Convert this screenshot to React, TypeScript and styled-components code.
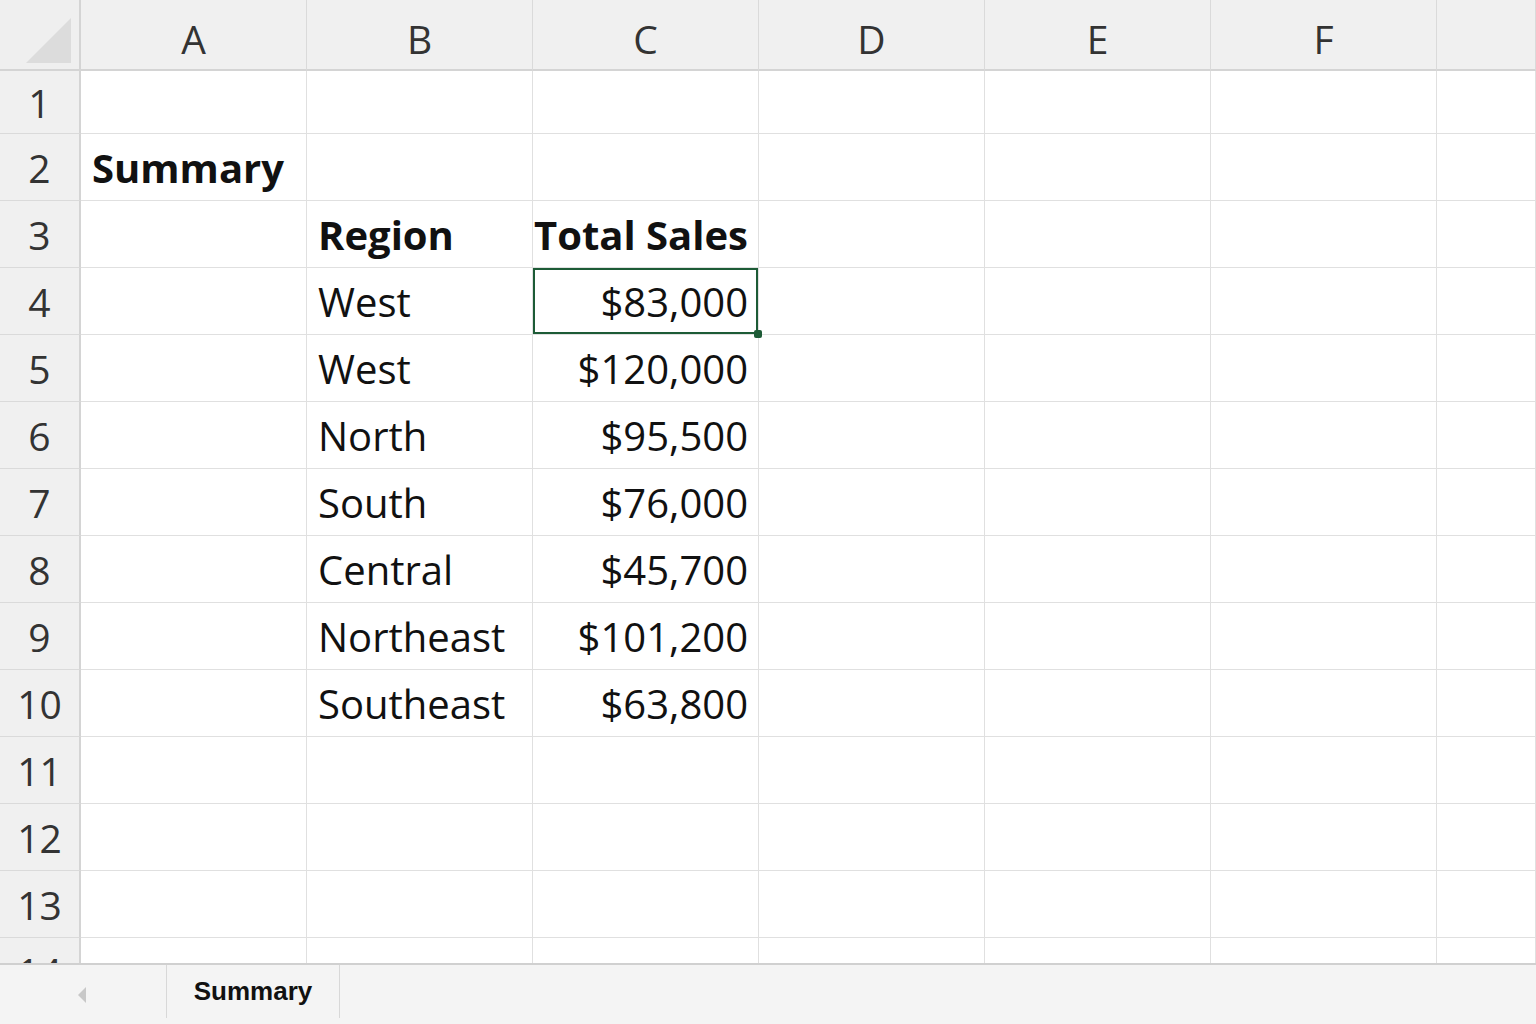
import React from "react";
import styled, { createGlobalStyle, css } from "styled-components";

const Global = createGlobalStyle`
  html, body { margin: 0; padding: 0; background: #fff; }
  body { font-family: "Open Sans", "Noto Sans", sans-serif; overflow: hidden; }
`;

const Page = styled.div`
  width: 1536px; height: 1024px; display: flex; flex-direction: column; overflow: hidden;
`;

const Grid = styled.div`
  height: 965px; overflow: hidden; display: grid;
  grid-template-columns: 81px repeat(6, 226px) 1fr;
  grid-template-rows: 71px 63px repeat(13, 67px);
`;

const Corner = styled.div`
  background: #efefef; border-right: 2px solid #d4d4d4; border-bottom: 2px solid #d4d4d4;
  position: relative;
  &::after {
    content: ""; position: absolute; right: 8px; bottom: 6px; width: 0; height: 0;
    border-left: 45px solid transparent; border-bottom: 45px solid #dcdcdc;
  }
`;

const ColHead = styled.div`
  background: #f0f0f0; border-right: 1px solid #dadada; border-bottom: 2px solid #d4d4d4;
  display: flex; align-items: center; justify-content: center;
  font-size: 39px; color: #333; padding-top: 8px;
`;

const RowHead = styled.div`
  background: #f0f0f0; border-right: 2px solid #d4d4d4; border-bottom: 1px solid #dadada;
  display: flex; align-items: center; justify-content: center;
  font-size: 39px; color: #333; padding-top: 0;
`;

const Cell = styled.div<{ $align?: "left" | "right"; $bold?: boolean; $sel?: boolean }>`
  border-right: 1px solid #e0e0e0; border-bottom: 1px solid #e0e0e0;
  display: flex; align-items: center; padding: 0 10px 0 11px;
  justify-content: ${(p) => (p.$align === "right" ? "flex-end" : "flex-start")};
  font-size: 40px; color: #111; white-space: nowrap; overflow: visible;
  font-weight: ${(p) => (p.$bold ? 700 : 400)};
  position: relative;
  ${(p) => p.$sel && css`
    box-shadow: inset 0 0 0 2px #1d5b36;
    &::after { content: ""; position: absolute; right: -4px; bottom: -4px; width: 8px; height: 8px; background: #1d5b36; border-radius: 2px; z-index: 2; }
  `}
`;

const TabBar = styled.div`
  height: 59px; background: #f4f4f4; border-top: 2px solid #d0d0d0; display: flex;
`;
const Nav = styled.div`
  width: 166px; display: flex; align-items: center; padding-left: 76px; box-sizing: border-box;
`;
const Tab = styled.div`
  width: 172px; border-left: 1px solid #d8d8d8; border-right: 1px solid #d8d8d8;
  display: flex; align-items: center; justify-content: center;
  font-family: "Liberation Sans", Arial, sans-serif; font-weight: 700; font-size: 26px; color: #111;
  margin-bottom: 6px;
`;

const cols = ["A", "B", "C", "D", "E", "F", ""];
const data: Record<number, { a?: string; b?: string; c?: string; bold?: boolean }> = {
  2: { a: "Summary" },
  3: { b: "Region", c: "Total Sales", bold: true },
  4: { b: "West", c: "$83,000" },
  5: { b: "West", c: "$120,000" },
  6: { b: "North", c: "$95,500" },
  7: { b: "South", c: "$76,000" },
  8: { b: "Central", c: "$45,700" },
  9: { b: "Northeast", c: "$101,200" },
  10: { b: "Southeast", c: "$63,800" },
};

export default function App() {
  const rows = Array.from({ length: 14 }, (_, i) => i + 1);
  return (
    <Page>
      <Global />
      <Grid>
        <Corner />
        {cols.map((c, i) => <ColHead key={i}>{c}</ColHead>)}
        {rows.map((r) => {
          const d = data[r] || {};
          return (
            <React.Fragment key={r}>
              <RowHead>{r}</RowHead>
              <Cell $bold={r === 2}>{d.a}</Cell>
              <Cell $bold={d.bold}>{d.b}</Cell>
              <Cell $bold={d.bold} $align="right" $sel={r === 4}>{d.c}</Cell>
              <Cell /><Cell /><Cell /><Cell />
            </React.Fragment>
          );
        })}
      </Grid>
      <TabBar>
        <Nav>
          <svg width="12" height="18" viewBox="0 0 12 18"><path d="M10 1 L2 9 L10 17 Z" fill="#c8c8c8" /></svg>
        </Nav>
        <Tab>Summary</Tab>
      </TabBar>
    </Page>
  );
}
